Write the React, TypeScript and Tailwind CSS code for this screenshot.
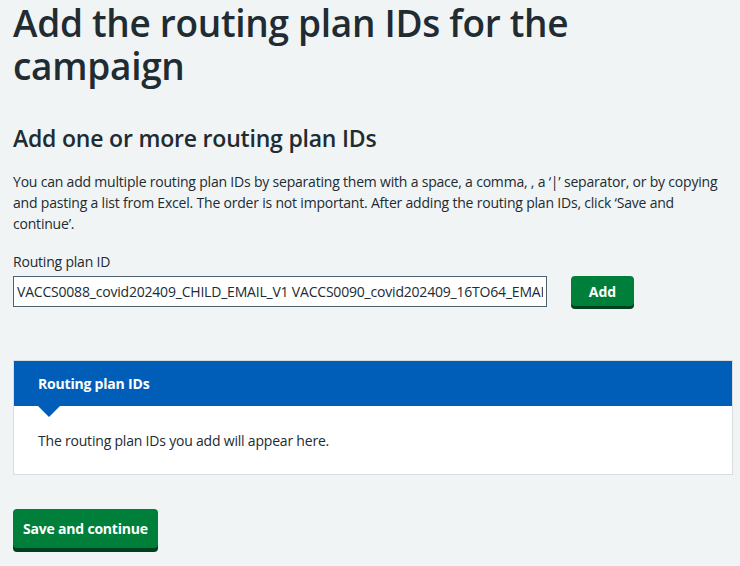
export default function App() {
  return (
    <main
      className="min-h-[566px] bg-[#f0f4f5] px-[13px] pt-[1px] text-[#212b32]"
      style={{ fontFamily: '"Open Sans", "Noto Sans", sans-serif' }}
    >
      <h1 className="text-[37px] leading-[43px] font-semibold tracking-[-0.3px]">
        Add the routing plan IDs for the campaign
      </h1>

      <h2 className="mt-[36px] text-[23px] leading-[30px] font-semibold tracking-[-0.2px]">
        Add one or more routing plan IDs
      </h2>

      <p className="mt-[18px] text-[14px] leading-[21px] tracking-[-0.2px]">
        You can add multiple routing plan IDs by separating them with a space, a comma, , a ‘|’ separator, or by copying
        and pasting a list from Excel. The order is not important. After adding the routing plan IDs, click ‘Save and
        continue’.
      </p>

      <label className="mt-[18px] block text-[14px] leading-[20px] tracking-[-0.2px]">Routing plan ID</label>
      <div className="mt-[4px] flex items-start gap-[24px]">
        <input
          className="h-[31px] w-[534px] border border-[#4c6272] bg-white px-[3px] text-[14px] tracking-[-0.2px] text-[#212b32] outline-none"
          defaultValue="VACCS0088_covid202409_CHILD_EMAIL_V1 VACCS0090_covid202409_16TO64_EMAIL_V1"
        />
        <button className="h-[30px] w-[63px] rounded-[4px] bg-[#007f3b] text-[14px] font-bold text-white shadow-[0_3px_0_#00401e]">
          Add
        </button>
      </div>

      <section className="mt-[53px] mr-[-6px] border border-[#d8dde0] bg-white">
        <div className="relative bg-[#005eb8] px-[24px] py-[13px]">
          <h3 className="text-[14px] leading-[19px] font-bold tracking-[-0.2px] text-white">Routing plan IDs</h3>
          <span className="absolute left-[24px] top-full h-0 w-0 border-x-[11px] border-t-[11px] border-x-transparent border-t-[#005eb8]" />
        </div>
        <p className="px-[24px] pt-[26px] pb-[24px] text-[14px] leading-[18px] tracking-[-0.2px]">
          The routing plan IDs you add will appear here.
        </p>
      </section>

      <button className="mt-[34px] h-[39px] rounded-[4px] bg-[#007f3b] px-[10px] text-[14px] font-bold tracking-[-0.2px] text-white shadow-[0_4px_0_#00401e]">
        Save and continue
      </button>
    </main>
  );
}
